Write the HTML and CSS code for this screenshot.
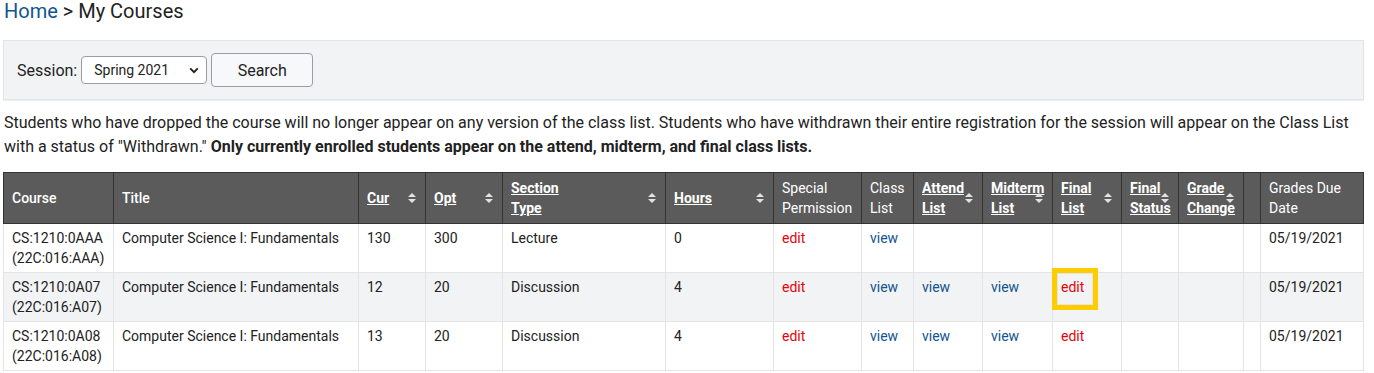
FILE: index.html
```html
<!DOCTYPE html>
<html lang="en">
<head>
    <meta charset="utf-8">
    <title>My Courses</title>
    <link rel="stylesheet" href="styles.css">
</head>
<body>
<div class="page">
    <div class="crumbs"><a href="#">Home</a> &gt; My Courses</div>

    <form class="filter">
        <label for="session">Session:</label>
        <span class="select-wrap">
            <select id="session">
                <option>Spring 2021</option>
            </select>
            <svg class="chev" width="10" height="7" viewBox="0 0 10 7"><path d="M1.2 1.4 5 5.2 8.8 1.4" fill="none" stroke="#222" stroke-width="1.9"/></svg>
        </span>
        <button type="button">Search</button>
    </form>

    <p class="note">
        Students who have dropped the course will no longer appear on any version of the class list. Students who have withdrawn their entire registration for the session will appear on the Class List with a status of "Withdrawn." <strong>Only currently enrolled students appear on the attend, midterm, and final class lists.</strong>
    </p>

    <table class="courses">
        <colgroup>
            <col style="width:110px"><col style="width:245px"><col style="width:67px"><col style="width:77px">
            <col style="width:163px"><col style="width:108px"><col style="width:88px"><col style="width:52px">
            <col style="width:69px"><col style="width:70px"><col style="width:69px"><col style="width:57px">
            <col style="width:65px"><col style="width:17px"><col style="width:103px">
        </colgroup>
        <thead>
        <tr>
            <th class="plain">Course</th>
            <th class="plain">Title</th>
            <th class="sort"><a href="#">Cur</a><i class="arrows"></i></th>
            <th class="sort"><a href="#">Opt</a><i class="arrows"></i></th>
            <th class="sort"><a href="#">Section<br>Type</a><i class="arrows"></i></th>
            <th class="sort"><a href="#">Hours</a><i class="arrows"></i></th>
            <th>Special Permission</th>
            <th>Class List</th>
            <th class="sort"><a href="#">Attend List</a><i class="arrows"></i></th>
            <th class="sort"><a href="#">Midterm List</a><i class="arrows"></i></th>
            <th class="sort"><a href="#">Final<br>List</a><i class="arrows"></i></th>
            <th class="sort tight"><a href="#">Final Status</a><i class="arrows"></i></th>
            <th class="sort tight"><a href="#">Grade Change</a><i class="arrows"></i></th>
            <th></th>
            <th>Grades Due Date</th>
        </tr>
        </thead>
        <tbody>
        <tr>
            <td>CS:1210:0AAA (22C:016:AAA)</td>
            <td>Computer Science I: Fundamentals</td>
            <td>130</td>
            <td>300</td>
            <td>Lecture</td>
            <td>0</td>
            <td><a class="edit" href="#">edit</a></td>
            <td><a class="view" href="#">view</a></td>
            <td></td>
            <td></td>
            <td></td>
            <td></td>
            <td></td>
            <td></td>
            <td>05/19/2021</td>
        </tr>
        <tr>
            <td>CS:1210:0A07 (22C:016:A07)</td>
            <td>Computer Science I: Fundamentals</td>
            <td>12</td>
            <td>20</td>
            <td>Discussion</td>
            <td>4</td>
            <td><a class="edit" href="#">edit</a></td>
            <td><a class="view" href="#">view</a></td>
            <td><a class="view" href="#">view</a></td>
            <td><a class="view" href="#">view</a></td>
            <td class="marked"><a class="edit" href="#">edit</a><span class="callout"></span></td>
            <td></td>
            <td></td>
            <td></td>
            <td>05/19/2021</td>
        </tr>
        <tr>
            <td>CS:1210:0A08 (22C:016:A08)</td>
            <td>Computer Science I: Fundamentals</td>
            <td>13</td>
            <td>20</td>
            <td>Discussion</td>
            <td>4</td>
            <td><a class="edit" href="#">edit</a></td>
            <td><a class="view" href="#">view</a></td>
            <td><a class="view" href="#">view</a></td>
            <td><a class="view" href="#">view</a></td>
            <td><a class="edit" href="#">edit</a></td>
            <td></td>
            <td></td>
            <td></td>
            <td>05/19/2021</td>
        </tr>
        </tbody>
    </table>
</div>
</body>
</html>
```

FILE: styles.css
```css
body {
    margin: 0;
    font-family: Roboto, "Liberation Sans", sans-serif;
    color: #222;
    background: white;
}
.page {
    width: 1361px;
    padding-left: 3px;
}
.crumbs {
    font-size: 20px;
    line-height: 22px;
    padding-left: 1px;
}
.crumbs a {
    color: #11558f;
    text-decoration: none;
}
.filter {
    margin-top: 18px;
    height: 58px;
    display: flex;
    align-items: center;
    padding-left: 13px;
    background-color: #f2f3f5;
    border: 1px solid #e3e4e6;
    box-shadow: 0 1px 1px rgba(0, 0, 0, 0.06);
}
.filter label {
    font-size: 16px;
    margin-right: 4px;
}
.select-wrap {
    position: relative;
    display: inline-block;
}
.filter select {
    appearance: none;
    -webkit-appearance: none;
    width: 126px;
    height: 28px;
    padding: 0 0 0 12px;
    border: 1px solid #9a9ea4;
    border-radius: 4px;
    background: white;
    font-family: Roboto, "Liberation Sans", sans-serif;
    font-size: 14px;
    color: #222;
}
.chev {
    position: absolute;
    right: 8px;
    top: 11px;
    pointer-events: none;
}
.filter button {
    margin-left: 4px;
    width: 102px;
    height: 34px;
    border: 1px solid #9a9ea4;
    border-radius: 4px;
    background: #f7f8fa;
    font-family: Roboto, "Liberation Sans", sans-serif;
    font-size: 16px;
    color: #222;
}
.note {
    margin: 11px 0 13px;
    padding-left: 1px;
    font-size: 16px;
    line-height: 24px;
}
.note strong {
    font-weight: 700;
}
.courses {
    width: 1360px;
    table-layout: fixed;
    border-collapse: collapse;
    font-size: 14px;
    line-height: 20px;
}
.courses th {
    position: relative;
    height: 40px;
    padding: 5px 8px;
    background-color: #5b5b5b;
    border: 1px solid #333;
    color: white;
    font-weight: 400;
    text-align: left;
    vertical-align: middle;
}
.courses th.plain {
    font-weight: 500;
}
.courses th a {
    color: white;
    font-weight: 700;
    text-decoration: underline;
}
.courses th.sort {
    padding-right: 14px;
}
.courses th.tight {
    padding-right: 2px;
}
.arrows {
    position: absolute;
    right: 9px;
    top: 50%;
    width: 8px;
    height: 10px;
    margin-top: -5px;
}
.arrows::before,
.arrows::after {
    content: "";
    position: absolute;
    left: 0;
    border-left: 4px solid transparent;
    border-right: 4px solid transparent;
}
.arrows::before {
    top: 0;
    border-bottom: 4px solid #e2e2e2;
}
.arrows::after {
    bottom: 0;
    border-top: 4px solid #e2e2e2;
}
.courses td {
    padding: 4px 8px;
    height: 40px;
    border: 1px solid #e3e4e6;
    vertical-align: top;
}
.courses tbody tr:nth-child(even) td {
    background-color: #f2f3f5;
}
.edit {
    color: #e8000b;
    text-decoration: none;
}
.view {
    color: #11558f;
    text-decoration: none;
}
.marked {
    position: relative;
}
.callout {
    position: absolute;
    left: -1px;
    top: -5px;
    width: 46px;
    height: 42px;
    box-sizing: border-box;
    border: 5px solid #ffcc00;
    box-shadow: inset 0 0 0 1px #e4e4e4;
}
```
